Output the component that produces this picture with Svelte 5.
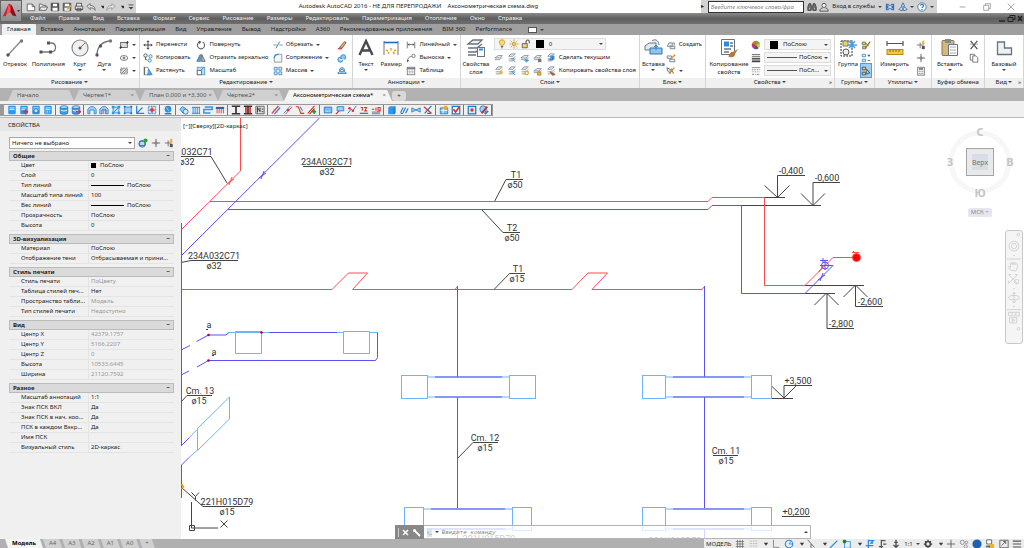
<script>
  const menus = ['Файл', 'Правка', 'Вид', 'Вставка', 'Формат', 'Сервис', 'Рисование', 'Размеры', 'Редактировать', 'Параметризация', 'Отопление', 'Окно', 'Справка'];
  const ribbonTabs = ['Главная', 'Вставка', 'Аннотации', 'Параметризация', 'Вид', 'Управление', 'Вывод', 'Надстройки', 'A360', 'Рекомендованные приложения', 'BIM 360', 'Performance'];
  const modify = [
    ['move', 'Перенести'], ['rotate', 'Повернуть'], ['trim', 'Обрезать', true], ['pencil', ''],
    ['copy', 'Копировать'], ['mirror', 'Отразить зеркально'], ['fillet', 'Сопряжение', true], ['explode', ''],
    ['stretch', 'Растянуть'], ['scale', 'Масштаб'], ['array', 'Массив', true], ['offset', '']
  ];
  const docs = [
    { name: 'Начало', cls: 'start' },
    { name: 'Чертеж1*', cls: 'short' },
    { name: 'План 0.000 и +3.300', cls: 'plan' },
    { name: 'Чертеж2*', cls: 'short' },
    { name: 'Аксонометрическая схема*', cls: 'active' }
  ];
  const tools = [
    ['page', 'pageRed', 'pageGear', 'calc'],
    ['drum', 'drumRed'],
    ['arch', 'archRed', 'frame', 'rect', 'axes', 'target'],
    ['globe'],
    ['boxes', 'radiator', 'pipes', 'comb'],
    ['beam', 'beamRed', 'beamNum'],
    ['slash', 'slash2', 'slash3', 'slashAdd'],
    ['label', 'flag', 'pen', 'level', 'level2'],
    ['block', 'valve', 'bow', 'cut'],
    ['table', 'check'],
    ['dot', 'brush']
  ];
  const sections = [
    { title: 'Общие', rows: [['Цвет', 'ПоСлою', 'color'], ['Слой', '0'], ['Тип линий', 'ПоСлою', 'stroke'], ['Масштаб типа линий', '100'], ['Вес линий', 'ПоСлою', 'stroke'], ['Прозрачность', 'ПоСлою'], ['Высота', '0']] },
    { title: '3D-визуализация', rows: [['Материал', 'ПоСлою'], ['Отображение тени', 'Отбрасываемая и прини...']] },
    { title: 'Стиль печати', rows: [['Стиль печати', 'ПоЦвету', 'off'], ['Таблица стилей печ...', 'Нет'], ['Пространство табли...', 'Модель', 'off'], ['Тип стилей печати', 'Недоступно', 'off']] },
    { title: 'Вид', rows: [['Центр X', '42379.1757', 'off'], ['Центр Y', '5166.2207', 'off'], ['Центр Z', '0', 'off'], ['Высота', '10533.6445', 'off'], ['Ширина', '21120.7592', 'off']] },
    { title: 'Разное', rows: [['Масштаб аннотаций', '1:1'], ['Знак ПСК ВКЛ', 'Да'], ['Знак ПСК в нач. коо...', 'Да'], ['ПСК в каждом Вэкр...', 'Да'], ['Имя ПСК', ''], ['Визуальный стиль', '2D-каркас']] }
  ];
  const labels = [
    [327, 165, '234А032С71'], [327, 175, 'ø32'], [194, 155, 'А032С71'], [187, 165, 'ø32'],
    [214, 259, '234А032С71'], [214, 269, 'ø32'], [516, 178, 'Т1'], [515, 188, 'ø50'],
    [512, 231, 'Т2'], [512, 241, 'ø50'], [518, 272, 'Т1'], [517, 282, 'ø15'],
    [200, 394, 'Cm. 13'], [199, 404, 'ø15'], [485, 441, 'Cm. 12'], [485, 451, 'ø15'],
    [726, 454, 'Cm. 11'], [726, 464, 'ø15'], [227, 505, '221Н015D79'], [227, 515, 'ø15'],
    [791, 174, '-0,400'], [827, 181, '-0,600'], [870, 305, '-2,600'], [841, 327, '-2,800'],
    [798, 384, '+3,500'], [796, 515, '+0,200'], [209, 328, 'а'], [214, 355, 'а'], [489, 542, '221Н015D79'], [675, 544, '221Н015D79']
  ];
  const radiators = [
    [401, 26, 509, 26, 375], [642, 23, 751, 20, 375],
    [404, 19, 512, 19, 507], [642, 23, 751, 20, 507]
  ];
  const status = ['grid', 'dots', 'v', 'ortho', 'polar', 'v', 'iso', 'v', 'osnap', 'osnap2', 'v', 'ann', 'ann2', 'ann3'];
  const status2 = ['gear', 'v', 'plus', 'iso2', 'ball', 'hw', 'full', 'burger'];

  const page = '<rect x="1.5" y="1" width="9" height="10" rx="1" fill="#2f97ea"/><path d="M3 3.500h6M3 5.500h6" stroke="#fff"/>';
  const drum = '<path d="M1.500 2.500v7c0 2 9 2 9 0v-7" fill="#3a9cec" stroke="#1b6db8"/><ellipse cx="6" cy="2.500" rx="4.500" ry="1.500" fill="#d9eeff" stroke="#1b6db8"/><path d="M2 6c1 1.500 7 1.500 8 0" stroke="#fff" fill="none"/>';
  const arch = '<path d="M1 10.500V5l3-3h4l3 3v5.500H8.500V6h-5v4.500z" fill="#9bd0fa" stroke="#2685d5"/>';
  const beam = '<path d="M1 1.500h10M1 10.500h10M6 1v10" stroke="#333" stroke-width="2"/>';
  const layer = '<path d="M1 6l4-3h5L7 6z" fill="#e6eaed" stroke="#6b7780" stroke-width=".8"/><path d="M1 8l6 0 3-3" fill="none" stroke="#6b7780" stroke-width=".8"/>';
  const layerStack = '<path d="M2 4l3-3h5L7 4zM2 7h5l3-3M2 9.500h5l3-3" fill="#e6eaed" stroke="#6b7780" stroke-width=".8"/>';

  // 12 x 12 glyphs
  const small = {
    v: '<path d="M3.500 4.500h5L6 8z" fill="#333"/>',
    new: '<path d="M1.500 2.500h6l3 3v5h-9z" fill="#fff" stroke="#555"/><path d="M7.500 2.500v3h3" fill="none" stroke="#555"/>',
    open: '<path d="M1.500 10V2.500h3l1 1.500h4v2M1.500 10l2-4h8l-2 4z" fill="#eee" stroke="#555"/>',
    save: '<path d="M1.500 1.500h9v9h-9z" fill="#555" stroke="#444"/><path d="M3.500 2h5v3h-5zM3 7h6v3.500H3z" fill="#fff"/>',
    saveAs: '<path d="M1.500 1.500h9v9h-9z" fill="#777" stroke="#444"/><path d="M3.500 2h5v3h-5zM3 7h6v3.500H3z" fill="#fff"/><path d="M6 9l5-5" stroke="#dca23c" stroke-width="2"/>',
    print: '<path d="M3 5V1.500h6V5M1.500 5h9v4h-9zM3.500 7.500h5v3h-5z" fill="#eee" stroke="#444"/>',
    undo: '<path d="M1 5l4-3v2c4 0 6 2 6 6C9.500 7.500 8 7 5 7v2z" fill="#ddd" stroke="#666"/>',
    redo: '<path d="M11 5L7 2v2C3 4 1 6 1 10c1.500-2.500 3-3 6-3v2z" fill="#ddd" stroke="#999"/>',
    more: '<path d="M3 3.500h6" stroke="#444"/><path d="M3 6h6L6 9z" fill="#444"/>',
    find: '<path d="M1 10V6l1.500-4h2L5 5h2l.5-3h2L11 6v4H7V7H5v3z" fill="#777" stroke="#333"/><path d="M2.500 8h1M8.500 8h1" stroke="#fff"/>',
    user: '<circle cx="6" cy="4" r="2.500" fill="#fff" stroke="#444"/><path d="M1 11c0-3 2-3.500 3.500-4M11 11c0-3-2-3.500-3.500-4M1 11h10" fill="none" stroke="#444"/>',
    exchange: '<path d="M1 2h3l2 2.500L8 2h3v8H8L6 7.500 4 10H1z" fill="#3a6fb5"/><path d="M3 4l6 4M9 4L3 8" stroke="#fff"/>',
    a360: '<path d="M6 1l2 4-2 1-2-1zM1 9l3-3 2 2-1 2.500zM11 9L8 6 6 8l1 2.500z" fill="#d5e5f7" stroke="#33609c"/>',
    help: '<circle cx="6" cy="6" r="5" fill="#fff" stroke="#2b6cb4"/><path d="M4.300 4.500c0-2.500 3.500-2 3.500 0C7.800 6 6 6 6 7.300M6 8.500v1" fill="none" stroke="#2b6cb4" stroke-width="1.300"/>',
    square: '<rect x="2" y="3" width="8" height="6" fill="#ddd" stroke="#555"/><path d="M1 10l2-2M9 4l2-2" stroke="#333" stroke-width="2"/>',
    ellipse: '<ellipse cx="6" cy="6" rx="4.500" ry="3" fill="#eee" stroke="#777"/><path d="M6 4.500v3M4.500 6h3" stroke="#555"/>',
    hatch: '<rect x="2" y="2.500" width="8" height="7" fill="#ddd" stroke="#666" stroke-dasharray="2 1"/><path d="M3 9l6-6M2 6l3-3M6 9l4-4" stroke="#777"/>',
    move: '<path d="M6 1v10M1 6h10M4.500 2.500L6 1l1.500 1.500M4.500 9.500L6 11l1.500-1.500M2.500 4.500L1 6l1.500 1.500M9.500 4.500L11 6 9.500 7.500" fill="none" stroke="#444" stroke-width="1.200"/>',
    rotate: '<path d="M4 2.500a4.300 4.300 0 1 0 4 0" fill="none" stroke="#666" stroke-width="1.300"/><path d="M3 .5l3.500 1.500L4 5z" fill="#555"/>',
    trim: '<path d="M.5 6h4M7.500 6h4" stroke="#5aa3dc" stroke-width="1.300"/><path d="M3.500 10L8 2" stroke="#555"/>',
    pencil: '<path d="M3 9l6-7 2 1-5 7z" fill="#eab26b" stroke="#644"/><path d="M1 10.500h5" stroke="#c33" stroke-width="1.500"/>',
    copy: '<circle cx="3" cy="3" r="2" fill="#fff" stroke="#444"/><circle cx="9" cy="4" r="2" fill="#d9ecfb" stroke="#3c8ccd"/><circle cx="8" cy="9" r="2" fill="#d9ecfb" stroke="#3c8ccd"/><path d="M3 5v3h2" stroke="#444" fill="none"/>',
    mirror: '<path d="M5 2v8H1z" fill="#5aa9e6" stroke="#2878bb"/><path d="M7 2v8h4z" fill="#ccc" stroke="#555"/><path d="M6 1v10" stroke="#555" stroke-width=".7"/>',
    fillet: '<path d="M1.500 11V6c0-3 2-4.500 5-4.500h4V11z" fill="#f4f6f7" stroke="#888"/><path d="M1.500 6c0-3 2-4.500 5-4.500" stroke="#2f8ad6" fill="none" stroke-width="1.500"/>',
    explode: '<circle cx="4" cy="8" r="3" fill="#8ec7f3" stroke="#2b82cc"/><circle cx="7.500" cy="5" r="3" fill="#8ec7f3" stroke="#2b82cc"/><path d="M3 8h6" stroke="#fff"/>',
    stretch: '<path d="M2 1.500h4l2 9H2z" fill="#fff" stroke="#888"/><path d="M1.500 1v10" stroke="#444"/><path d="M6 4h1l4 6.500H5" fill="#56a7e8" stroke="#2c7dc4"/>',
    scale: '<rect x="1.500" y="1.500" width="9" height="9" fill="#b9dcf6" stroke="#4c97d3"/><rect x="1.500" y="5.500" width="5" height="5" fill="#fff" stroke="#666"/><path d="M6 5l3-3" stroke="#2878bb"/>',
    array: '<path d="M1.500 1.500h3.500v3.500H1.500zM7 1.500h3.500v3.500H7zM1.500 7h3.500v3.500H1.500zM7 7h3.500v3.500H7z" fill="#d6ebfb" stroke="#3987c6"/>',
    offset: '<path d="M1 9h10V8c-2 0-2-1-2-3 0-4-6-4-6 0 0 2 0 3-2 3z" fill="#a8d4f7" stroke="#2b82cc"/><path d="M4.500 7h3V5c0-1.500-3-1.500-3 0z" fill="#fff" stroke="#666"/>',
    linear: '<path d="M1.500 2v8M10.500 2v8M2 5.500h8" stroke="#666"/><path d="M2 5.500l2-1.500v3zM10 5.500L8 4v3z" fill="#555"/>',
    leader: '<path d="M1.500 10.500C2 6 4 4 7 4" fill="none" stroke="#666"/><path d="M1 8l.5 3L4 9z" fill="#555"/><circle cx="9" cy="3.500" r="2" fill="#fff" stroke="#666"/>',
    table2: '<rect x="1.500" y="1.500" width="9" height="9" fill="#fff" stroke="#777"/><path d="M1 2h10v2H1z" fill="#77838c"/><path d="M1.500 7h9M4.500 4v6.500M7.500 4v6.500" stroke="#999" stroke-width=".7"/>',
    bulb: '<path d="M6 1c4 0 4 4 1.500 6.500h-3C2 5 2 1 6 1z" fill="#ffd969" stroke="#c29428"/><path d="M4.500 9h3M5 10.500h2" stroke="#555"/>',
    sun: '<circle cx="6" cy="6" r="2.200" fill="#ffd14d" stroke="#b78a20"/><path d="M6 .5v2M6 9.500v2M.5 6h2M9.500 6h2M2 2l1.500 1.500M8.500 8.500L10 10M10 2L8.500 3.500M3.500 8.500L2 10" stroke="#c29428"/>',
    lock: '<path d="M1.500 5.500h6v5h-6z" fill="#f3d36b" stroke="#555"/><path d="M6 5V3.500c0-3 4-3 4 0V5" fill="none" stroke="#555" stroke-width="1.300"/>',
    lay1: layer, lay2: layerStack + '<path d="M7 8l3 3M5 7h4" stroke="#2c86d1"/>', lay3: layer + '<path d="M5 9h6M8 6.500v5M6 7l4 4M10 7l-4 4" stroke="#2c86d1" stroke-width=".8"/>',
    lay4: layer + '<rect x="6" y="7" width="4" height="4" fill="#777"/>', lay5: layerStack + '<path d="M5 3h5v5H5z" fill="#4499dc"/><path d="M3 8h5V4" stroke="#1b6db8" fill="none"/>',
    lay6: layerStack + '<circle cx="8.500" cy="8" r="2" fill="#f3ae2d"/>', lay7: layerStack + '<path d="M7 8l3 3M5 7h4" stroke="#2c86d1"/>', lay8: layerStack + '<circle cx="8" cy="8.500" r="2" fill="#fff" stroke="#e59a15" stroke-width="1.300"/>',
    lay9: layer + '<path d="M5.500 7h4v4h-4z" fill="#efb435" stroke="#8b6720" stroke-width=".7"/>', lay10: layerStack + '<path d="M5 7l6 3-3 1.500z" fill="#c46a24" stroke="#6b3b17" stroke-width=".6"/>',
    create: '<path d="M1.500 7.500l2-4h4v4zM5 7.500h5.500v3H5z" fill="#eef2f5" stroke="#6b7780"/><path d="M8 3.500h2v3" fill="none" stroke="#6b7780"/>',
    edit: '<path d="M1.500 3.500h5v3h-5zM4.500 7.500h6v3h-6z" fill="#eef2f5" stroke="#6b7780"/><path d="M7 6l4-4" stroke="#e29b32" stroke-width="2"/>',
    attr: '<path d="M1 2l4 2v5L2 6z" fill="#eee" stroke="#666"/><path d="M4 9l6-7M6 3l3 6" stroke="#b68438" stroke-width="1.500"/>',
    wheel: '<circle cx="6" cy="6" r="5" fill="#e9c23a"/><path d="M6 6V1a5 5 0 0 1 4.500 3z" fill="#6ab04c"/><path d="M6 6L1.500 4A5 5 0 0 1 6 1z" fill="#e8622c"/><path d="M6 6L1.500 4A5 5 0 0 0 3 10z" fill="#c23668"/><path d="M6 6l-3 4a5 5 0 0 0 6 0z" fill="#3a54b4"/>',
    weight: '<path d="M1 2h10M1 4.500h10" stroke="#444"/><path d="M1 7h10" stroke="#444" stroke-width="1.700"/><path d="M1 10h10" stroke="#444" stroke-width="2.200"/>',
    ltype: '<path d="M1 2h10" stroke="#777"/><path d="M1 4.500h10" stroke="#777" stroke-dasharray="2 1"/><path d="M1 7h10" stroke="#777" stroke-dasharray="1 1"/><path d="M1 10h10" stroke="#777" stroke-dasharray="3 1 1 1"/>',
    g1: '<path d="M1.500 2.500h4v3h-4zM2 7.500h4v3H2z" fill="#efcf5a" stroke="#665"/><path d="M5 10l6-8" stroke="#b36b22" stroke-width="1.600"/><path d="M6 4l3 3" stroke="#5a9a33" stroke-width="1.500"/>',
    g2: '<path d="M1.500 1.500h4v3h-4zM1.500 7.500h4v3h-4z" fill="#d7ebfa" stroke="#4a8cc4"/><path d="M8 3h3M9.500 1.500v3M8 9h3" stroke="#555"/>',
    g3: '<path d="M1.500 1.500h4v3h-4zM1.500 7.500h4v3h-4z" fill="#eed56c" stroke="#445"/><path d="M7 4v6l1.500-1.500 2 0z" fill="#fff" stroke="#333"/>',
    pick: '<path d="M5 3v7M1 6h8" stroke="#666"/><path d="M8 1L6.500 4.500h2L7 8l4-4.500H9l1.500-2.500z" fill="#f1a73a"/><rect x="7" y="7" width="3.500" height="4" fill="#555"/>',
    cross: '<path d="M6 1v10M1 6h10" stroke="#555"/><circle cx="6" cy="6" r="1.300" fill="#fff" stroke="#555"/>',
    calcu: '<rect x="2" y="1.500" width="8" height="9.500" fill="#eee" stroke="#777"/><path d="M3.500 3.500h5" stroke="#555" stroke-width="1.500"/><path d="M3.500 6.500h5M3.500 9h5" stroke="#777" stroke-dasharray="1 1"/>',
    cutClip: '<path d="M2 1l8 10M10 1L2 11" stroke="#555" stroke-width="1.500"/><path d="M1 5h4M7 5h4" stroke="#999"/>',
    copyClip: '<path d="M1.500 1.500h5v7h-5z" fill="#fff" stroke="#666"/><path d="M4.500 3.500h4l2 2V11h-6z" fill="#fff" stroke="#666"/>',
    quick: '<circle cx="5" cy="7" r="4" fill="#9fc3e2" stroke="#356a99"/><path d="M2 4h6v5H2z" fill="#bcd9ee" stroke="#356a99"/><circle cx="9" cy="3" r="2.500" fill="#27a52f"/>',
    page, pageRed: page + '<path d="M8 11V5M5 8h6" stroke="#e02f2f" stroke-width="2"/>', pageGear: page + '<circle cx="6" cy="7" r="2.500" fill="#cfe7fb" stroke="#1769b5"/>',
    calc: page + '<path d="M3 7.500h6M3 9.500h6" stroke="#fff" stroke-dasharray="1 1"/>',
    drum, drumRed: drum + '<path d="M6 8h5M9 6l2.500 2L9 10" stroke="#e02f2f" stroke-width="1.500" fill="none"/>',
    arch, archRed: arch + '<path d="M5 11V5M7.500 11V5" stroke="#e02f2f"/>',
    frame: '<path d="M2.500 2.500h7v7h-7z" fill="#bfe0fa" stroke="#2685d5"/><path d="M1 1h3v3H1zM8 1h3v3H8zM1 8h3v3H1zM8 8h3v3H8z" fill="#2f97ea"/><path d="M3 9l6-6" stroke="#2685d5"/>',
    rect: '<path d="M2 2.500h8v7H2z" fill="#9fd2fb" stroke="#2685d5"/><path d="M1 1h2v2H1zM9 1h2v2H9zM1 9h2v2H1zM9 9h2v2H9z" fill="#1769b5"/>',
    axes: '<path d="M2 1v9h9M2 10l7-7" fill="none" stroke="#2685d5" stroke-width="1.500"/>',
    target: '<path d="M1.500 1.500h9v9h-9z" fill="#bfe0fa" stroke="#2685d5" stroke-dasharray="2 1"/><path d="M6 2v8M2 6h8" stroke="#e02f2f"/><circle cx="6" cy="6" r="2" fill="#e02f2f"/>',
    globe: '<circle cx="6" cy="5" r="4" fill="#2f8fe2"/><path d="M4 3l3 4" stroke="#bfe0fa"/><path d="M2 10.500h8" stroke="#1d66aa" stroke-width="1.500"/>',
    boxes: '<path d="M1 5l3-3 4 2v4l-3 2z" fill="#8dc8f7" stroke="#2378c2"/><circle cx="8" cy="8" r="3" fill="#d3eafd" stroke="#2378c2"/>',
    radiator: '<path d="M2.500 2v9M5 2v9M7.500 2v9M10 2v9M1 3h10M1 10h10" stroke="#2f97ea" stroke-width="1.200"/>',
    pipes: '<path d="M2 2.500h9v3H1v4h8" fill="none" stroke="#2f97ea" stroke-width="1.800"/>',
    comb: '<path d="M1 3.500h10" stroke="#1769b5" stroke-width="2.500"/><path d="M2.500 4v6M5 4v6M7.500 4v6M10 4v6" stroke="#e02f2f"/>',
    beam, beamRed: beam + '<path d="M3.500 2v8M8.500 2v8" stroke="#e02f2f" stroke-width="2"/>',
    beamNum: '<path d="M1 1.500h10v9H1z" fill="#ddd" stroke="#555"/><path d="M3 9V3l3 5V3M8 5h2M8 8h2" fill="none" stroke="#222"/>',
    slash: '<path d="M1 10L9 1" stroke="#e02f2f" stroke-width="1.500"/><path d="M4 11l7-8" stroke="#2f7fd0" stroke-width="1.500"/><path d="M3 5l5 4" stroke="#888" stroke-width=".7"/>',
    slash2: '<path d="M1 10L9 1" stroke="#2f7fd0"/><path d="M3 11l8-9" stroke="#e02f2f"/><circle cx="6" cy="6" r="1.500" fill="#e02f2f"/>',
    slash3: '<path d="M1 2h3l3 8h4" fill="none" stroke="#e02f2f" stroke-width="1.300"/><path d="M6 2l3 5" stroke="#2f7fd0" stroke-width="1.300"/>',
    slashAdd: '<path d="M1 10L9 1M3 11l6-7" stroke="#c33" stroke-width="1.300"/><path d="M6 8h5M8.500 5.500v5" stroke="#1e9c2c" stroke-width="2"/>',
    label: '<path d="M1.500 2.500h9v7h-9z" fill="#79bcf3" stroke="#2378c2"/><path d="M3 7.500h6" stroke="#fff" stroke-dasharray="1 1"/>',
    flag: '<path d="M2.500 2h8v5h-8z" fill="#9fd2fb" stroke="#2378c2"/><path d="M1 11l4-4" stroke="#e02f2f" stroke-width="1.500"/>',
    pen: '<path d="M1 10L5 5l2 2 4-6" fill="none" stroke="#1769b5"/><circle cx="3" cy="4" r="1.500" fill="#e02f2f"/><circle cx="7" cy="7" r="1.500" fill="#e02f2f"/>',
    level: '<path d="M1 10h10" stroke="#2378c2" stroke-width="1.500"/><path d="M2 3h2v4M6 3h3L7 7h3" fill="none" stroke="#e02f2f" stroke-width="1.300"/>',
    level2: '<path d="M1 10.500h10" stroke="#2378c2"/><path d="M1 5h3M6 3v4M8.500 3H11v4H8.500z" fill="none" stroke="#e02f2f" stroke-width="1.300"/><path d="M1 8.500h10" stroke="#555"/>',
    block: '<path d="M1.500 3l2-1.500h7v8l-2 1.500h-7z" fill="#2f97ea"/><path d="M8.500 3v8" stroke="#1769b5"/>',
    valve: '<path d="M2 9l3-6M5 9l3-6M2 10h3M8 10l3-6" stroke="#2378c2" stroke-width="1.300"/>',
    bow: '<path d="M1 3.500l5 2.500-5 2.500zM11 3.500L6 6l5 2.500z" fill="#9fd2fb" stroke="#2378c2"/>',
    cut: '<path d="M1 2l9 8" stroke="#e02f2f" stroke-width="1.500"/><path d="M10 1L2 10M5 10h5" stroke="#2378c2" stroke-width="1.500"/>',
    table: '<path d="M1.500 3.500h9v7h-9z" fill="#79bcf3" stroke="#2378c2"/><path d="M2 6.500h8M5 4v6" stroke="#fff"/><path d="M6 1h4v4H6z" fill="#e6a837"/>',
    check: '<path d="M1.500 1.500h9v9h-9z" fill="#fff" stroke="#2378c2" stroke-width="1.500"/><path d="M3 5l2.500 3.500L10 2" fill="none" stroke="#e02f2f" stroke-width="2"/>',
    dot: '<path d="M1.500 1.500h9v9h-9z" fill="#d3eafd" stroke="#2378c2" stroke-width="1.500"/><circle cx="6" cy="6" r="2" fill="#e02f2f"/>',
    brush: '<circle cx="5" cy="5" r="4" fill="#9fd2fb" stroke="#2378c2"/><path d="M3 10l7-8" stroke="#c52b2b" stroke-width="2"/><path d="M7 11l4-4" stroke="#2378c2" stroke-width="2"/>',
    grid: '<path d="M3 1v10M6 1v10M9 1v10M1 3h10M1 6h10M1 9h10" stroke="#777"/>',
    dots: '<path d="M2 2.500h9M2 5.500h9M2 8.500h9" stroke="#999" stroke-dasharray="1 1"/>',
    ortho: '<path d="M3 1v9h7" fill="none" stroke="#777"/>',
    polar: '<circle cx="6" cy="6" r="4.500" fill="none" stroke="#2b8be0" stroke-width="1.300"/><path d="M6 6h5M6 6l3-4" stroke="#2b8be0"/>',
    iso: '<path d="M2 1l8 9M6 6v6" stroke="#555"/>',
    osnap: '<path d="M1 11l9-9" stroke="#2b8be0" stroke-width="1.500"/>',
    osnap2: '<path d="M3 3h7v8H3z" fill="none" stroke="#2b8be0"/><path d="M1 1h4v4H1z" fill="#2e7d32"/>',
    ann: '<path d="M4 1v10M4 2h6L7 5h3M1 8h9" fill="none" stroke="#2b8be0" stroke-width="1.500"/>',
    ann2: '<path d="M4 1v10M4 2h5M6 6h4M1 9h5" fill="none" stroke="#555" stroke-width="1.500"/>',
    ann3: '<path d="M6 1v9M3 7l3 3 3-3M4 4h4" fill="none" stroke="#444" stroke-width="1.500"/>',
    gear: '<circle cx="6" cy="6" r="3" fill="none" stroke="#444" stroke-width="2"/><path d="M6 1v2M6 9v2M1 6h2M9 6h2M2.500 2.500l1 1M9.500 2.500l-1 1" stroke="#444" stroke-width="1.500"/>',
    plus: '<path d="M6 1v10M1 6h10" stroke="#555"/>',
    iso2: '<circle cx="4" cy="4" r="2.500" fill="none" stroke="#888"/><circle cx="9" cy="4" r="1.500" fill="none" stroke="#888"/><circle cx="8" cy="9" r="2" fill="none" stroke="#888"/>',
    ball: '<circle cx="6" cy="6" r="5.500" fill="#1d62ab"/>',
    hw: '<path d="M2 1h6v5H2z" fill="#fff" stroke="#555"/><path d="M4 6h7v5H4z" fill="#e8b52f"/><path d="M1 9h5" stroke="#2b6cb4" stroke-width="2"/>',
    full: '<path d="M1 1.500h10v9H1z" fill="none" stroke="#555"/><path d="M3 8l5-5M5 3h3v3" fill="none" stroke="#555"/>',
    burger: '<path d="M1 2.500h10M1 6h10M1 9.500h10" stroke="#555" stroke-width="1.300"/>'
  };

  // 20 x 20 glyphs
  const large = {
    line: '<path d="M3 17L16 3" stroke="#888" stroke-width="1.300"/><circle cx="3" cy="17" r="1.700" fill="#555"/><circle cx="16.500" cy="3" r="1.700" fill="#777"/>',
    pline: '<path d="M3 14h10c6 0 6-9 0-9h-2" fill="none" stroke="#777" stroke-width="1.300"/><path d="M1.500 12.500h3v3h-3zM11 12.500h3v3h-3zM9 3.500h3v3H9z" fill="#555"/>',
    circle: '<circle cx="10" cy="10" r="8" fill="#eef1f3" stroke="#888" stroke-width="1.200"/><path d="M10 10l5-5" stroke="#2f8ad6"/><circle cx="10" cy="10" r="1.500" fill="#555"/>',
    arc: '<path d="M3 17c0-8 5-14 14-14" fill="none" stroke="#777" stroke-width="1.300"/><circle cx="3" cy="17" r="1.700" fill="#555"/><circle cx="6.500" cy="8" r="1.700" fill="#555"/><circle cx="16.500" cy="3" r="1.700" fill="#777"/>',
    text: '<path d="M3.500 17L10 3l6.500 14M6 12.500h8" fill="none" stroke="#454b50" stroke-width="2.400"/>',
    dim: '<path d="M3 3v14M17 3v14" stroke="#777"/><path d="M3 4.500h14" stroke="#1c6cc4" stroke-width="1.600"/><path d="M5 12l2 1M10 10v2.500M15 12l-2 1M7 16l1-2M12 14l1.500 2" stroke="#eda41c" stroke-width="1.500"/>',
    layers: '<path d="M2 6l5-4h9l-4 4zM2 10h9l5-4M2 14h8l3-3M2 17h8" fill="#eef1f3" stroke="#68747d" stroke-width="1.300"/><rect x="11.500" y="9.500" width="7" height="9" fill="#fff" stroke="#68747d"/><path d="M13 11.500h4" stroke="#2f8ad6" stroke-width="2"/>',
    insert: '<path d="M2 8l4-3h7v7H2zM9 3c3-3 7 0 7 4" fill="#e5eaee" stroke="#68747d"/><path d="M7 10h12v6H7z" fill="#8ec4ee" stroke="#3475ab"/><path d="M13 12v-4M11 9l2-2 2 2" fill="none" stroke="#2f8ad6"/>',
    match: '<path d="M2.500 1.500h13v15h-13z" fill="#fff" stroke="#68747d"/><path d="M5 3.500h5v5H5z" fill="#2f8ad6"/><path d="M11 5h3M11 8h3M5 11h7M5 14h5" stroke="#68747d" stroke-width="1.500"/><path d="M9 18c2 0 2-5 5-4l5-3-3 5c0 4-5 4-7 2z" fill="#b5763a"/>',
    group: '<path d="M3 3h11v15H3z" fill="none" stroke="#333" stroke-dasharray="2 1"/><path d="M5 3h5v5H5z" fill="#f2d655" stroke="#777"/><circle cx="8" cy="14" r="3" fill="#eee" stroke="#555"/><path d="M14 2v9M10 7h9M11 3l6 7M17 3l-6 7" stroke="#4a9ee2" stroke-width="1.300"/>',
    measure: '<path d="M2 3v5M18 3v5M2 5.500h16" stroke="#555" stroke-width="1.200"/><rect x="2" y="11.500" width="16" height="5" fill="#f4c744" stroke="#b78a20"/><path d="M5 12v2M8 12v2M11 12v2M14 12v2" stroke="#8a671a"/>',
    paste: '<rect x="2" y="2.500" width="12" height="15" rx="1" fill="#d9b67c" stroke="#8c7350"/><path d="M5 1h6v4H5z" fill="#888"/><path d="M8.500 6.500h9v11h-9z" fill="#fff" stroke="#68747d"/><path d="M10 9h6M10 12h6M10 15h6" stroke="#aaa"/>',
    base: '<path d="M3.500 4h7v6h7v6.500h-14z" fill="#eef1f3" stroke="#68747d" stroke-width="1.300"/>'
  };
</script>

{#snippet icon(name)}
  <svg class="ico" viewBox="0 0 12 12" aria-hidden="true">{@html small[name]}</svg>
{/snippet}

{#snippet big(name, label, caret = true)}
  <button class="big">
    <svg viewBox="0 0 20 20" aria-hidden="true">{@html large[name]}</svg>
    <span>{label}</span>
    {#if caret}<i class="caret"></i>{/if}
  </button>
{/snippet}

{#snippet tool(name, label = '', caret = false)}
  <button class="tool" aria-label={label || name}>
    {@render icon(name)}
    {#if label}<span>{label}</span>{/if}
    {#if caret}<i class="caret"></i>{/if}
  </button>
{/snippet}

<div class="app">
  <header>
    <button class="logo" aria-label="AutoCAD">
      <svg viewBox="0 0 21 21"><path d="M2 16L8 3l3 1 5 12-4-1-2-3-4 1-1 3z" fill="#d3202b" /><path d="M8 3l2 5 0 4-4 1z" fill="#f3565c" /><path d="M11 4l5 12-4-1-2-4z" fill="#8f0f18" /><path d="M17 9.500h3l-1.500 2z" fill="#333" /></svg>
    </button>
    <div class="title">
      <div class="quick">
        {#each ['new', 'open', 'save', 'saveAs', 'print', 'undo', 'v', 'redo', 'v', 'more'] as name}
          <button class:narrow={name === 'v'} aria-label={name}>{@render icon(name)}</button>
        {/each}
      </div>
      <h1>Autodesk AutoCAD 2016 - НЕ ДЛЯ ПЕРЕПРОДАЖИ &nbsp;&nbsp; Аксонометрическая схема.dwg</h1>
      <div class="info">
        <span class="play">▸</span>
        <input type="search" placeholder="Введите ключевое слово/фразу" aria-label="Поиск" />
        {@render tool('find')}
        {@render tool('user', 'Вход в службы', true)}
        {@render tool('exchange')}
        {@render tool('a360')}
        <i class="caret"></i>
        {@render tool('help')}
        <i class="caret"></i>
      </div>
      <div class="window">
        <button aria-label="Свернуть"><svg class="ico" viewBox="0 0 12 12"><path d="M2 6h7" stroke="#999" /></svg></button>
        <button aria-label="Развернуть"><svg class="ico" viewBox="0 0 12 12"><path d="M2 4h6v6H2zM4 4V2h6v6H8" fill="none" stroke="#999" /></svg></button>
        <button aria-label="Закрыть"><svg class="ico" viewBox="0 0 12 12"><path d="M2 2l8 8M10 2l-8 8" stroke="#999" /></svg></button>
      </div>
    </div>
    <nav class="menu">
      {#each menus as m}<button>{m}</button>{/each}
      <span class="mdi"><svg viewBox="0 0 26 9"><path d="M1 7h6" stroke="#222" stroke-width="1.500" /><path d="M10 3.500h5v4h-5zM12 3V1.500h5v4h-2" fill="none" stroke="#222" /><path d="M20 2l4 5M24 2l-4 5" stroke="#222" stroke-width="1.500" /></svg></span>
    </nav>
  </header>

  <nav class="tabs">
    {#each ribbonTabs as t, i}<button class:active={i === 0}>{t}</button>{/each}
    <button class="toggle" aria-label="Свернуть ленту"><b></b><i class="caret"></i></button>
  </nav>

  <div class="ribbon">
    <section>
      <div class="body">
        {@render big('line', 'Отрезок', false)}
        {@render big('pline', 'Полилиния', false)}
        {@render big('circle', 'Круг')}
        {@render big('arc', 'Дуга')}
        <div class="stack">
          {#each ['square', 'ellipse', 'hatch'] as n}
            <button class="tool" aria-label={n}>{@render icon(n)}<i class="caret"></i></button>
          {/each}
        </div>
      </div>
      <footer>Рисование <i class="caret"></i></footer>
    </section>
    <section>
      <div class="body modify">
        {#each modify as [n, label, caret]}{@render tool(n, label, caret)}{/each}
      </div>
      <footer>Редактирование <i class="caret"></i></footer>
    </section>
    <section>
      <div class="body">
        {@render big('text', 'Текст')}
        {@render big('dim', 'Размер', false)}
        <div class="stack">
          {@render tool('linear', 'Линейный', true)}
          {@render tool('leader', 'Выноска', true)}
          {@render tool('table2', 'Таблица')}
        </div>
      </div>
      <footer>Аннотации <i class="caret"></i></footer>
    </section>
    <section>
      <div class="body">
        {@render big('layers', 'Свойства слоя', false)}
        <div class="stack wide">
          <label class="combo layer">
            {@render icon('bulb')}{@render icon('sun')}{@render icon('lock')}<b class="swatch"></b>
            <select aria-label="Слой"><option>0</option></select><i class="caret"></i>
          </label>
          <div class="line">
            {#each ['lay1', 'lay2', 'lay3', 'lay4'] as n}{@render tool(n)}{/each}
            {@render tool('lay5', 'Сделать текущим')}
          </div>
          <div class="line">
            {#each ['lay6', 'lay7', 'lay8', 'lay9'] as n}{@render tool(n)}{/each}
            {@render tool('lay10', 'Копировать свойства слоя')}
          </div>
        </div>
      </div>
      <footer>Слои <i class="caret"></i></footer>
    </section>
    <section>
      <div class="body">
        {@render big('insert', 'Вставка')}
        <div class="stack">
          {@render tool('create', 'Создать')}
          {@render tool('edit')}
          <button class="tool" aria-label="Атрибуты">{@render icon('attr')}<i class="caret"></i></button>
        </div>
      </div>
      <footer>Блок <i class="caret"></i></footer>
    </section>
    <section>
      <div class="body">
        {@render big('match', 'Копирование свойств', false)}
        <div class="stack props">
          <div class="line">{@render icon('wheel')}<label class="combo"><b class="swatch"></b><select aria-label="Цвет"><option>ПоСлою</option></select><i class="caret"></i></label></div>
          <div class="line">{@render icon('weight')}<label class="combo"><b class="rule"></b><select aria-label="Вес линий"><option>ПоСлою</option></select><i class="caret"></i></label></div>
          <div class="line">{@render icon('ltype')}<label class="combo"><b class="rule"></b><select aria-label="Тип линий"><option>ПоСл...</option></select><i class="caret"></i></label></div>
        </div>
      </div>
      <footer>Свойства <i class="caret"></i><em>»</em></footer>
    </section>
    <section>
      <div class="body">
        {@render big('group', 'Группа', false)}
        <div class="stack pressed">{#each ['g1', 'g2', 'g3'] as n}{@render tool(n)}{/each}</div>
      </div>
      <footer>Группы <i class="caret"></i></footer>
    </section>
    <section>
      <div class="body spread">
        {@render big('measure', 'Измерить')}
        <div class="stack">{#each ['pick', 'cross', 'calcu'] as n}{@render tool(n)}{/each}</div>
      </div>
      <footer>Утилиты <i class="caret"></i></footer>
    </section>
    <section>
      <div class="body spread">
        {@render big('paste', 'Вставить')}
        <div class="stack">{#each ['cutClip', 'copyClip'] as n}{@render tool(n)}{/each}</div>
      </div>
      <footer>Буфер обмена</footer>
    </section>
    <section>
      <div class="body spread">{@render big('base', 'Базовый')}</div>
      <footer>Вид <i class="caret"></i><em>»</em></footer>
    </section>
  </div>

  <div class="docs">
    {#each docs as d}
      <div class="doc {d.cls}"><button>{d.name}</button>{#if d.cls !== 'start'}<button class="x" aria-label="Закрыть">×</button>{/if}</div>
    {/each}
    <button class="add">+</button>
  </div>

  <div class="toolbar">
    <div class="strip">
      {#each tools as group}
        <div class="set">{#each group as n}<button aria-label={n}>{@render icon(n)}</button>{/each}</div>
      {/each}
    </div>
  </div>

  <main>
    <aside>
      <h2>СВОЙСТВА</h2>
      <div class="pick">
        <label class="combo"><select aria-label="Выбор"><option>Ничего не выбрано</option></select><i class="caret"></i></label>
        {@render tool('quick')}{@render tool('cross')}{@render tool('pick')}
      </div>
      {#each sections as s}
        <button class="head">{s.title}<span>−</span></button>
        <table>
          <tbody>
            {#each s.rows as [k, v, kind]}
              <tr>
                <th>{k}</th>
                <td class={kind}>{#if kind === 'color' || kind === 'stroke'}<b></b>{/if}{v}</td>
              </tr>
            {/each}
          </tbody>
        </table>
      {/each}
    </aside>

    <div class="canvas">
      <svg class="drawing">
        <g transform="translate(-181 -118)" fill="none">
          <g class="thin">
            <path d="M181 156.500H211L227 183M303 166.500h48M181 262.500l10-2h47M494.500 201.500L506 179.500h17M482 210l21 22.500h17M494.500 289l15-15.500H525" />
            <path d="M181 402l6-6.500h25M458 458l15-15.500h25M713 455.500h25M181 487l22 19.500h47M782 516.500h28" />
            <path d="M764 197.500h21M741 205.500h80M805 285.500h59M805 293.500h30" />
            <path d="M805 175.500h-27.500V197M764.500 185.500l13 12 12-12M840 182.500h-27V205M801 193.500l12 12 12-12" />
            <path d="M883 306.500h-27.500V285M843.500 297l12-12 12 12M854 328.500h-27V293M814.500 305l12-12 12 12" />
            <path d="M812 385.500h-28V398M771.500 386l12.500 12 12-12M771 398.500h22" />
            <path d="M191.500 502v26H218M189.500 525.500h5v5h-5zM220.500 520.500l7 7M227.500 520.500l-7 7M191.500 492.500l4 4 3.500-4M195.500 496.500v4M206 329.500h2M212 355.500h2" />
          </g>
          <g class="red">
            <path d="M240.500 118V171L181 230M210 201.500H708l4-4h52.500v88H805l28-28h20M227 184l7-5M229 185l3-8" />
            <path d="M181 289.500H332l16.500-16.500H367.500L352.500 289.500H572l16-16.500h19.500L592 289.500H702l2.500-3M455 289.500l2.500-3" />
            <circle cx="856.500" cy="257.500" r="4" fill="#f00" /><path d="M852 252.500h7M854 251l-2 2M819 272l4-6" />
          </g>
          <g class="blue">
            <path d="M319.500 118L181 256M228 209.500H708l4-4h29.500v88H805l28-28h-11M259 178l7-5M261 179l3-8" />
            <path d="M181.500 223V446M181.500 465V498M181 350l9-4.500M196.500 341.500l12-6.500H226l3-2.500M181 375l8-4M197 367l11.500-6.500H375.500l2-3V332.500M269 332.500h68M181 446l8-8M181 465.500l8-8" />
            <path d="M457.500 286V377M457.500 397V508M457.500 529v20M704.500 286V377M704.500 397V508M704.500 529v20" />
            <circle cx="825" cy="265.500" r="3.500" /><path d="M820 260.500h8M823 258v5M825 261v9M820 265.500h10M818 280l7-5M820 281l3-8" />
          </g>
          <g class="sky">
            <path d="M228 332.500h41M337 332.500h7M370 332.500h7.500M235.500 331.500h26v22h-26zM343.500 331.500h26v22h-26z" />
            <path d="M189 438l8-8.500M189 457.500l8-7M197.500 428.500L229.500 397v22L197.500 450.500z" />
          </g>
          {#each radiators as [x1, w1, x2, w2, y]}
            <g class="sky">
              <rect x={x1 + 0.5} y={y + 0.5} width={w1} height="23" />
              <rect x={x2 + 0.5} y={y + 0.5} width={w2} height="23" />
              <path d="M{x1 + w1} {y + 2}H{x2}M{x1 + w1} {y + 22}H{x2}" />
            </g>
            <path class="blue" d="M{x1 + w1 + 8} {y + 2}H{x2 - 7}M{x1 + w1 + 8} {y + 22}H{x2 - 7}" />
          {/each}
          <g fill="#c00020"><circle cx="208.500" cy="335" r="1.300" /><circle cx="208.500" cy="360.500" r="1.300" /><circle cx="261.500" cy="332.500" r="1.300" /></g>
          <path d="M181.500 484l2 3-2 2" stroke="#ff9500" stroke-width="1.500" />
          {#each labels as [x, y, t]}<text {x} {y}>{t}</text>{/each}
        </g>
      </svg>
      <span class="viewname">[−][Сверху][2D-каркас]</span>

      <div class="cube">
        <svg viewBox="0 0 76 76" aria-hidden="true">
          <circle cx="38" cy="38" r="29" fill="none" stroke="#f7f7f7" stroke-width="5" />
          <rect x="24.500" y="24.500" width="27" height="27" fill="#e9e9e9" stroke="#a4a4a4" />
          <rect x="30" y="30" width="16" height="16" fill="#d9dee6" />
          <text x="38" y="12" class="dir">С</text><text x="8" y="42" class="dir">З</text><text x="68" y="42" class="dir">В</text><text x="38" y="73" class="dir">Ю</text>
          <text x="38" y="41" class="face">Верх</text>
        </svg>
        <button>МСК <i class="caret"></i></button>
      </div>

      <div class="navbar">
        <svg viewBox="0 0 18 114" aria-hidden="true" fill="none" stroke="#cfcfcf">
          <circle cx="9" cy="17" r="5.500" /><circle cx="9" cy="17" r="3" /><circle cx="14" cy="4" r="1.500" />
          <path d="M1 31.500h16M1 88.500h16" />
          <path d="M5 44c-4-5-1-5 0-3v-5c1-1 2 0 2 2 0-4 2-4 2 0 0-4 3-3 2 0 1-2 3-1 2 1 0 3-1 5-2 6z" />
          <path d="M3 49l10 10M13 49L3 59M3 49h3M10 49h3M3 59v-3" /><circle cx="12" cy="57" r="2.500" />
          <path d="M9 69v12M7 71l2-2 2 2M7 79l2 2 2-2" /><ellipse cx="9" cy="75" rx="6" ry="2.500" />
          <path d="M3 91.500h12v4H3zM7 91v4M11 91v4M4 97.500h8v6H4zM7 99l3 1.500-3 1.500z" /><circle cx="14" cy="110" r="1.500" />
          <path d="M8 27.500h2M8 65h2M8 85h2" />
        </svg>
      </div>

      <div class="command">
        <span class="grip"><svg viewBox="0 0 29 14"><path d="M3.500 3v9" stroke="#ccc" /><path d="M8 5l5 5M13 5l-5 5" stroke="#fff" stroke-width="1.500" /><path d="M19 5l6 6" stroke="#fff" stroke-width="1.800" /><circle cx="19.500" cy="5.500" r="1.500" fill="#fff" /></svg></span>
        <span class="prompt">›_</span><i class="caret"></i>
        <input placeholder="Введите команду" aria-label="Команда" />
        <i class="caret up"></i>
      </div>
    </div>
  </main>

  <div class="bottom">
    <div class="sheets">
      {#each ['Модель', 'A4', 'A3', 'A2', 'A1', 'A0', '+'] as s, i}<button class:active={i === 0}>{s}</button>{/each}
    </div>
    <div class="status">
      <span>МОДЕЛЬ</span>
      {#each status as n}<button class:narrow={n === 'v'} aria-label={n}>{@render icon(n)}</button>{/each}
      <span>1:1</span><i class="caret"></i>
      {#each status2 as n}<button class:narrow={n === 'v'} aria-label={n}>{@render icon(n)}</button>{/each}
    </div>
  </div>
</div>

<style>
  :global(body) {
    overflow: hidden;
  }
  .app {
    height: 100vh;
    display: flex;
    flex-direction: column;
    font: 6px/9px "Noto Sans", "Open Sans", sans-serif;
    color: #222;
    background: #f0f0f0;
    white-space: nowrap;
  }
  button, input, select {
    font: inherit;
    color: inherit;
    border: 0;
    background: none;
    padding: 0;
    margin: 0;
    outline: 0;
    appearance: none;
    white-space: nowrap;
  }
  svg {
    display: block;
  }
  .ico {
    width: 10px;
    height: 10px;
    flex: none;
  }
  .caret {
    width: 0;
    height: 0;
    flex: none;
    border: 2px solid transparent;
    border-top: 2px solid #444;
    border-bottom: 0;
    display: inline-block;
    vertical-align: middle;
  }
  .up {
    transform: rotate(180deg);
  }

  header {
    position: relative;
  }
  .logo {
    position: absolute;
    left: 0;
    top: 0;
    width: 22px;
    height: 22px;
    background: linear-gradient(#bbb, #8d8d8d);
    border: 1px solid #666;
  }
  .title {
    height: 13px;
    display: flex;
    align-items: center;
    background: #fff;
  }
  .quick {
    height: 13px;
    padding-left: 26px;
    width: 110px;
    background: #d2d2d2;
    display: flex;
    align-items: center;
    justify-content: space-between;
  }
  .quick .narrow {
    width: 6px;
    overflow: hidden;
  }
  h1 {
    flex: 1;
    margin: 0;
    text-align: center;
    font: inherit;
    color: #222;
  }
  .info {
    width: 236px;
    height: 13px;
    box-sizing: border-box;
    padding-right: 3px;
    background: #d2d2d2;
    display: flex;
    align-items: center;
    justify-content: space-between;
  }
  .info input {
    width: 96px;
    height: 12px;
    box-sizing: border-box;
    border: 1px solid #333;
    background: #fff;
    font-style: italic;
    padding-left: 2px;
  }
  .info input::placeholder, .command input::placeholder {
    color: #888;
    opacity: 1;
  }
  .play {
    width: 4px;
  }
  .window {
    width: 87px;
    box-sizing: border-box;
    display: flex;
    justify-content: space-between;
    padding: 0 8px 0 21px;
  }
  .menu {
    height: 11px;
    display: flex;
    align-items: center;
    gap: 13px;
    padding-left: 30px;
    background: linear-gradient(#8b8b8b, #5f5f5f 50%, #6e6e6e);
    color: #f0f0f0;
  }
  .mdi {
    margin-left: auto;
    width: 26px;
  }
  .tabs {
    height: 11px;
    padding-left: 2px;
    display: flex;
    background: #9f9f9f;
  }
  .tabs button {
    padding: 0 5px;
  }
  .tabs .active {
    background: #f1f1f1;
    border-radius: 1px 1px 0 0;
  }
  .toggle {
    display: flex;
    align-items: center;
    gap: 3px;
    margin-left: 6px;
  }
  .toggle b {
    width: 7px;
    height: 4px;
    border: 1px solid #555;
    background: #fff;
  }

  .ribbon {
    display: grid;
    grid-template-columns: 140fr 213fr 108fr 179fr 66fr 129fr 40fr 57fr 53fr 39fr;
    height: 53px;
    background: #fff;
  }
  section {
    min-width: 0;
    display: flex;
    flex-direction: column;
    border-right: 1px solid #d5d5d5;
  }
  .body {
    flex: 1;
    display: flex;
    gap: 2px;
    padding: 3px 3px 0;
    justify-content: space-between;
  }
  .spread {
    justify-content: space-around;
  }
  .modify {
    display: grid;
    grid-template-columns: 54fr 77fr 65fr 12fr;
    align-content: start;
    gap: 0;
  }
  .stack {
    display: flex;
    flex-direction: column;
  }
  .wide {
    flex: 1;
    padding-left: 4px;
  }
  .props {
    width: 84px;
  }
  footer {
    height: 10px;
    text-align: center;
    background: #f0f0f0;
    position: relative;
  }
  footer em {
    position: absolute;
    right: 2px;
    font-style: normal;
  }
  .big {
    display: flex;
    flex-direction: column;
    align-items: center;
    min-width: 20px;
  }
  .big svg {
    width: 20px;
    height: 20px;
    margin-bottom: 2px;
  }
  .big span {
    white-space: normal;
    max-width: 42px;
    line-height: 8px;
  }
  .big .caret {
    margin-top: 1px;
  }
  .tool {
    height: 13px;
    display: flex;
    align-items: center;
    gap: 3px;
  }
  .pressed .tool:last-child {
    background: #9dccf5;
    box-shadow: 0 0 0 1px #5b9bd5;
  }
  .line {
    height: 13px;
    display: flex;
    align-items: center;
    gap: 3px;
  }
  .combo {
    height: 11px;
    flex: 1;
    box-sizing: border-box;
    display: flex;
    align-items: center;
    gap: 2px;
    padding: 0 2px;
    background: #f4f4f4;
    border: 1px solid #ddd;
    min-width: 0;
  }
  .layer {
    flex: none;
    width: 112px;
    height: 12px;
    margin-bottom: 1px;
  }
  .combo select {
    flex: 1;
    min-width: 0;
    width: 0;
    text-overflow: clip;
  }
  .swatch {
    width: 8px;
    height: 8px;
    margin: 0 3px;
    background: #000;
  }
  .rule {
    width: 30px;
    border-top: 1px solid #555;
  }

  .docs {
    height: 13px;
    display: flex;
    align-items: flex-end;
    background: #b2b2b2;
    padding-left: 8px;
  }
  .doc {
    height: 11px;
    box-sizing: border-box;
    padding: 0 6px 0 9px;
    display: flex;
    justify-content: space-between;
    align-items: center;
    background: #d0d0d0;
    color: #555;
    clip-path: polygon(5px 0, calc(100% - 5px) 0, 100% 100%, 0 100%);
  }
  .start {
    width: 66px;
  }
  .short {
    width: 66px;
  }
  .plan {
    width: 78px;
  }
  .active.doc {
    width: 108px;
    background: #f4f4f4;
    color: #000;
  }
  .x {
    color: #777;
  }
  .add {
    width: 14px;
    height: 10px;
    background: #d8d8d8;
    border-radius: 3px;
  }
  .toolbar {
    height: 17px;
    box-sizing: border-box;
    padding-top: 3px;
    border-bottom: 1px solid #bbb;
  }
  .strip {
    width: max-content;
    display: flex;
    height: 12px;
    box-sizing: border-box;
    border: 1px solid #999;
    border-left: 4px solid #999;
  }
  .set {
    display: flex;
    gap: 2px;
    padding: 0 2px 0 3px;
    border-right: 1px solid #777;
  }

  main {
    flex: 1;
    min-height: 0;
    display: flex;
  }
  aside {
    width: 181px;
    flex: none;
    box-sizing: border-box;
    padding-right: 7px;
    padding-left: 9px;
  }
  h2 {
    margin: 0 -7px 0 -9px;
    height: 13px;
    padding-left: 8px;
    font: inherit;
    line-height: 14px;
    background: #e6e6e6;
  }
  .pick {
    display: flex;
    align-items: center;
    gap: 3px;
    height: 12px;
    margin: 6px 0 2px;
  }
  .pick .combo {
    background: #fff;
    border-color: #aaa;
    height: 12px;
  }
  .head {
    width: 100%;
    height: 10px;
    box-sizing: border-box;
    display: flex;
    align-items: center;
    justify-content: space-between;
    padding: 0 3px;
    font-weight: bold;
    background: #dadada;
    border: 1px solid #bbb;
  }
  table {
    width: 100%;
    table-layout: fixed;
    border-spacing: 0;
    margin-bottom: 3px;
  }
  th, td {
    height: 9px;
    padding: 0 0 0 2px;
    border-bottom: 1px solid #e4e4e4;
    font-weight: normal;
    text-align: left;
    line-height: 9px;
  }
  th {
    width: 67px;
    padding-left: 12px;
    border-right: 1px solid #e4e4e4;
  }
  .off {
    color: #999;
  }
  td b {
    display: inline-block;
    vertical-align: middle;
    margin-right: 4px;
    width: 5px;
    height: 5px;
    background: #000;
  }
  .stroke b {
    width: 33px;
    height: 1px;
    margin-right: 3px;
  }

  .canvas {
    flex: 1;
    position: relative;
    overflow: hidden;
    background: #fff;
  }
  .drawing {
    position: absolute;
    width: 100%;
    height: 100%;
  }
  .drawing text {
    font: 9px Roboto, sans-serif;
    text-anchor: middle;
    fill: #333;
  }
  .thin {
    stroke: #444;
  }
  .red {
    stroke: #ff4b4b;
  }
  .blue {
    stroke: #5a50f5;
  }
  .sky {
    stroke: #6bb5ff;
  }
  .viewname {
    position: absolute;
    left: 2px;
    top: 4px;
  }
  .cube {
    position: absolute;
    top: 6px;
    right: 6px;
    width: 76px;
    display: flex;
    flex-direction: column;
    align-items: center;
    gap: 8px;
  }
  .cube svg {
    width: 76px;
    height: 76px;
  }
  .cube text {
    text-anchor: middle;
  }
  .dir {
    font-size: 11px;
    font-weight: bold;
    fill: #c4c4c4;
  }
  .face {
    font-size: 7px;
    fill: #777;
  }
  .cube button {
    width: 24px;
    height: 9px;
    border-radius: 2px;
    background: #e6e6f0;
    color: #888;
  }
  .cube .caret {
    border-top-color: #bbb;
  }
  .navbar {
    position: absolute;
    top: 112px;
    right: 1px;
    width: 18px;
    height: 114px;
    box-sizing: border-box;
    border: 1px solid #c8c8c8;
    border-radius: 3px;
    background: #f5f5f5;
  }
  .command {
    position: absolute;
    left: 214px;
    right: 213px;
    bottom: 0;
    height: 14px;
    box-sizing: border-box;
    display: flex;
    align-items: center;
    gap: 3px;
    padding-right: 2px;
    border: 1px solid #b5b5b5;
    background: rgba(255, 255, 255, 0.75);
  }
  .grip {
    width: 29px;
    height: 14px;
    margin: -1px 0 -1px -1px;
    background: #888;
  }
  .prompt {
    background: #dde3ea;
    color: #567;
  }
  .command input {
    flex: 1;
    font: italic 6px "Liberation Mono", monospace;
  }

  .bottom {
    height: 9px;
    display: flex;
    justify-content: space-between;
    background: #b0b0b0;
    overflow: hidden;
  }
  .sheets {
    display: flex;
    padding-left: 5px;
  }
  .sheets button {
    padding: 0 6px;
    background: #d0d0d0;
    color: #666;
    clip-path: polygon(0 0, calc(100% - 3px) 0, 100% 100%, 3px 100%);
  }
  .sheets .active {
    padding: 0 7px;
    background: #f4f4f4;
    color: #000;
    font-weight: bold;
  }
  .status {
    width: 320px;
    box-sizing: border-box;
    padding: 1px 2px 0;
    display: flex;
    align-items: center;
    justify-content: space-between;
    background: #ececec;
  }
  .narrow {
    width: 6px;
  }
</style>
